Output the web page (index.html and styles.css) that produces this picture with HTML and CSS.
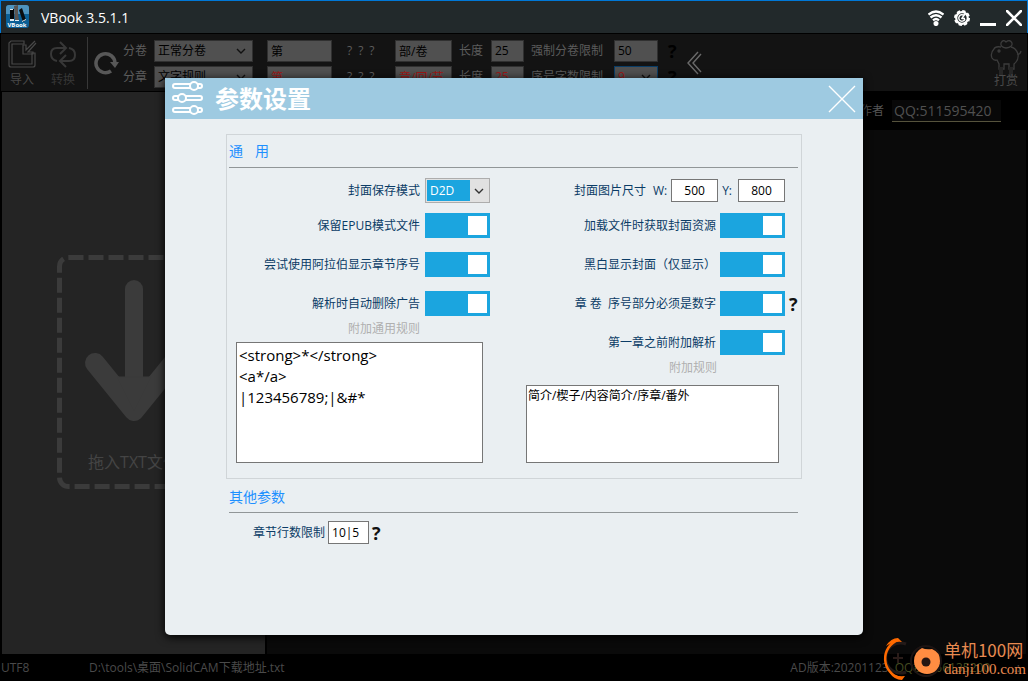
FILE: index.html
```html
<!DOCTYPE html>
<html lang="zh-CN">
<head>
<meta charset="utf-8">
<title>VBook 3.5.1.1</title>
<link rel="stylesheet" href="styles.css">
</head>
<body>
<div class="app">
  <header class="titlebar">
    <svg class="app-icon" width="24" height="24" viewBox="0 0 24 24" aria-hidden="true">
      <rect x="0" y="0" width="23" height="23" rx="3" fill="#0b5f96"/>
      <path d="M0 3a3 3 0 0 1 3-3h17a3 3 0 0 1 3 3v6H0z" fill="#4d93bf"/>
      <path d="M4 4h4v12H4z" fill="#05080a"/>
      <path d="M8 1l4-1v8l1 8H9z" fill="#5a5552"/>
      <path d="M13 5l3-2 4 12-3 2z" fill="#0a0d10"/>
      <path d="M4 14h4v2H4zM9 15h4v1H9zM16 16l4-2v1l-4 2zM4 4h3v1H4z" fill="#dfeaf0"/>
      <text x="11" y="22" text-anchor="middle" class="app-icon-text">VBook</text>
    </svg>
    <h1 class="app-title">VBook 3.5.1.1</h1>
    <div class="window-buttons">
      <button class="icon-button" aria-label="网络">
        <svg width="16" height="16" viewBox="0 0 16 16" fill="none" stroke="#fff" stroke-width="2.300"><path d="M0.500 4.500q7.500-6 15 0M2.500 7.500q5.500-4.500 11 0M5 10.300q3-2.500 6 0"/><circle cx="8" cy="13.500" r="1.400" fill="#fff"/></svg>
      </button>
      <button class="icon-button" aria-label="设置">
        <svg width="16" height="16" viewBox="0 0 16 16" fill="none" stroke="#fff"><circle cx="8" cy="8" r="5.800" stroke-width="2.200"/><circle cx="8" cy="8" r="7.100" stroke-width="1.800" stroke-dasharray="3.400 2.177"/><path d="M10 5.500A3.200 3.200 0 1 0 11 9M7.500 9L11 4M8 8.500h3" stroke-width="1.400"/></svg>
      </button>
      <button class="icon-button" aria-label="最小化">
        <svg width="16" height="16" viewBox="0 0 16 16"><path d="M0 13h16v3H0z" fill="#fff"/></svg>
      </button>
      <button class="icon-button" aria-label="关闭">
        <svg width="16" height="16" viewBox="0 0 16 16"><path d="M1 1l14 14M15 1L1 15" stroke="#fff" stroke-width="2.600" stroke-linecap="round"/></svg>
      </button>
    </div>
  </header>

  <section class="toolbar">
    <button class="tool">
      <svg width="30" height="30" viewBox="0 0 30 30" fill="none" stroke="#484848" stroke-width="1.200"><path d="M17 2H4L2 4v22q0 2 2 2h22q2 0 2-2V14h-3v11H5V5h12z"/><path d="M28 2l-9 9V6h-3v9h10v-2h-5l8-9"/></svg>
      <span>导入</span>
    </button>
    <button class="tool dim">
      <svg width="30" height="30" viewBox="0 0 30 30" fill="none" stroke="#383838" stroke-width="2"><path d="M9 22q-6-1-6-7 0-6 6-6h8M12 3l6 6-6 6M21 9q6 1 6 7 0 6-6 6h-8M18 16l-6 6 6 6"/></svg>
      <span>转换</span>
    </button>
    <div class="tool-divider"></div>
    <button class="icon-button refresh" aria-label="刷新">
      <svg width="26" height="26" viewBox="0 0 26 26"><path d="M17 21A9.500 9.500 0 1 1 21 13" fill="none" stroke="#585858" stroke-width="3.500"/><path d="M16 12h9l-4 6z" fill="#585858"/></svg>
    </button>
    <div class="rules">
      <label for="vol">分卷</label>
      <select id="vol" class="field f-mode"><option>正常分卷</option></select>
      <input class="field f-pre" aria-label="分卷前缀" value="第">
      <span class="marks">?&ensp;?&ensp;?</span>
      <input class="field f-unit" aria-label="分卷单位" value="部/卷">
      <label for="len1">长度</label>
      <input id="len1" class="field f-len" value="25">
      <label for="lim1">强制分卷限制</label>
      <input id="lim1" class="field f-lim" value="50">
      <span class="ask">?</span>

      <label for="chap">分章</label>
      <select id="chap" class="field f-mode"><option>文字规则</option></select>
      <input class="field f-pre red" aria-label="分章前缀" value="第">
      <span class="marks">?&ensp;?&ensp;?</span>
      <input class="field f-unit red" aria-label="分章单位" value="章/回/节">
      <label for="len2">长度</label>
      <input id="len2" class="field f-len red" value="25">
      <label for="lim2">序号字数限制</label>
      <select id="lim2" class="field f-lim red active"><option>9</option></select>
      <span class="ask">?</span>
    </div>
    <button class="icon-button collapse" aria-label="收起">
      <svg width="16" height="24" viewBox="0 0 16 24" fill="none" stroke="#6a6a6a" stroke-width="1.400"><path d="M12 1L2 12l10 11M15 3L7 12l8 9"/></svg>
    </button>
    <button class="tool reward">
      <svg width="32" height="38" viewBox="0 0 32 38" fill="none" stroke="#3c3c3c" stroke-width="1.300"><path d="M11 8Q5 7 4 10q-4 4-2 9 2 3 5 2l2 4v5h5v-5h5v5h5v-5q5-4 4-10-2-6-7-7M27 15q3 1 4-3"/><path d="M16 9q-6-1-5-5 2-4 5-1 4-3 6 1 1 4-6 5z"/><circle cx="9" cy="12" r="1"/><path d="M11 28v9M21 28v9" stroke="#262626" stroke-width="4"/></svg>
      <span>打赏</span>
    </button>
  </section>

  <main class="workspace">
    <section class="drop-panel">
      <div class="drop-zone">
        <svg width="154" height="234" viewBox="0 0 154 234" fill="none" stroke="#3b3b3b" aria-hidden="true">
          <rect x="2.500" y="2.500" width="149" height="229" rx="9" stroke-width="5" stroke-dasharray="15 5"/>
          <path d="M77 34v110" stroke-width="18" stroke-linecap="round"/>
          <path d="M38 108l39 48 39-48" stroke-width="20" stroke-linecap="round" stroke-linejoin="round"/>
          <path d="M60 122h34l-17 34z" fill="#3b3b3b"/>
        </svg>
        <span class="drop-text">拖入TXT文件</span>
      </div>
    </section>
    <section class="content-panel">
      <div class="author-row">
        <label for="author">作者</label>
        <input id="author" class="author" value="QQ:511595420">
      </div>
      <div class="content-area"></div>
    </section>
  </main>

  <footer class="statusbar">
    <span class="encoding">UTF8</span>
    <span class="path">D:\tools\桌面\SolidCAM下载地址.txt</span>
    <span class="version">AD版本:20201123</span>
    <span class="group">QQ群:956135200</span>
    <span class="grip">.:</span>
  </footer>

  <div class="overlay">
    <section class="dialog" role="dialog" aria-labelledby="dialog-title">
      <header class="dialog-head">
        <svg width="34" height="36" viewBox="0 0 34 36" fill="none" stroke="#fff" stroke-width="2" aria-hidden="true">
          <rect x="3" y="3" width="29" height="4" rx="2"/><circle cx="24" cy="5" r="4" fill="#9ecae1"/>
          <rect x="3" y="15" width="29" height="4" rx="2"/><circle cx="12" cy="17" r="4" fill="#9ecae1"/>
          <rect x="3" y="27" width="29" height="4" rx="2"/><circle cx="24" cy="29" r="4" fill="#9ecae1"/>
        </svg>
        <h2 id="dialog-title">参数设置</h2>
        <button class="icon-button dialog-close" aria-label="关闭设置">
          <svg width="28" height="28" viewBox="0 0 28 28" stroke="#fff" stroke-width="1.400"><path d="M1 1l26 26M27 1L1 27"/></svg>
        </button>
      </header>
      <div class="dialog-body">
        <section class="group-box">
          <h3 class="group-title spaced">通<span>用</span></h3>
          <div class="columns">
            <div class="column">
              <div class="row first"><label for="cover">封面保存模式</label><select id="cover" class="combo"><option>D2D</option></select></div>
              <div class="row"><label for="t1">保留EPUB模式文件</label><input id="t1" class="toggle" type="checkbox" checked></div>
              <div class="row"><label for="t2">尝试使用阿拉伯显示章节序号</label><input id="t2" class="toggle" type="checkbox" checked></div>
              <div class="row"><label for="t3">解析时自动删除广告</label><input id="t3" class="toggle" type="checkbox" checked></div>
              <label class="hint" for="rules1">附加通用规则</label>
              <textarea id="rules1" class="box large">&lt;strong&gt;*&lt;/strong&gt;
&lt;a*/a&gt;
|123456789;|&amp;#*</textarea>
            </div>
            <div class="column right">
              <div class="row first size">
                <span>封面图片尺寸</span>
                <label for="cw">W:</label><input id="cw" class="num" value="500">
                <label for="cy">Y:</label><input id="cy" class="num" value="800">
              </div>
              <div class="row"><label for="t4">加载文件时获取封面资源</label><input id="t4" class="toggle" type="checkbox" checked></div>
              <div class="row"><label for="t5">黑白显示封面（仅显示）</label><input id="t5" class="toggle" type="checkbox" checked></div>
              <div class="row"><label for="t6">章 卷&nbsp; 序号部分必须是数字</label><input id="t6" class="toggle" type="checkbox" checked><span class="help">?</span></div>
              <div class="row"><label for="t7">第一章之前附加解析</label><input id="t7" class="toggle" type="checkbox" checked></div>
              <label class="hint" for="rules2">附加规则</label>
              <textarea id="rules2" class="box small">简介/楔子/内容简介/序章/番外</textarea>
            </div>
          </div>
        </section>
        <section class="other">
          <h3 class="group-title">其他参数</h3>
          <div class="other-row">
            <label for="lines">章节行数限制</label>
            <input id="lines" class="num lines" value="10|5">
            <span class="help">?</span>
          </div>
        </section>
      </div>
    </section>
  </div>

  <aside class="watermark">
    <svg width="64" height="44" viewBox="0 0 64 44" fill="none" aria-hidden="true">
      <path d="M26 7A15 15 0 1 0 26 35" stroke="#241a18" stroke-width="3"/>
      <path d="M13 21h10M18 16v10" stroke="#2a1c19" stroke-width="2"/>
      <circle cx="46" cy="24" r="15" stroke="#1c1413" stroke-width="2"/>
      <path d="M18 3A20 20 0 0 0 20 41" stroke="#ff6a00" stroke-width="2.500"/>
      <path d="M6 9Q11 1 18 1l4 4q-8-1-16 4zM9 35q6 5 16 4l-3 4q-8 0-13-8z" fill="#ff6a00"/>
      <path d="M42 11q4 2 10 1 8 3 8 12a13 13 0 1 1-26 0q0-9 8-13z" fill="#ff8d42"/>
      <circle cx="46" cy="25" r="4.500" fill="#241512"/>
    </svg>
    <div class="watermark-text"><strong>单机100网</strong><span>danji100.com</span></div>
  </aside>
</div>
</body>
</html>
```
FILE: styles.css
```css
* { box-sizing: border-box; }

body {
  margin: 0;
  background: #000;
  font: 12px/16px "Open Sans", "Noto Sans CJK SC", sans-serif;
}

h1, h2, h3 { margin: 0; font-weight: 400; }

input, select, textarea, button { font: inherit; margin: 0; border-radius: 0; }

.icon-button {
  display: flex;
  padding: 0;
  border: 0;
  background: none;
}

.app {
  position: relative;
  display: flex;
  flex-direction: column;
  min-height: 100vh;
}

/* Title bar */
.titlebar {
  display: flex;
  align-items: center;
  height: 33px;
  padding: 0 5px;
  border: 1px solid #0078d7;
  border-bottom: 0;
  background: #22292b;
}
.app-icon-text { font: 700 6px "Open Sans", sans-serif; fill: #fff; }
.app-title { margin-left: 11px; padding-top: 2px; font-size: 14px; line-height: 20px; color: #fff; }
.window-buttons { display: flex; gap: 10px; margin-left: auto; padding-top: 2px; }

/* Toolbar */
.toolbar {
  display: flex;
  align-items: center;
  height: 57px;
  margin: 1px 1px 0;
  padding-left: 5px;
  background: #131313;
  color: #5c5c5c;
}
.tool {
  display: flex;
  flex-direction: column;
  align-items: center;
  gap: 3px;
  width: 32px;
  padding: 2px 0 0;
  border: 0;
  background: none;
  font-size: 12px;
  color: #484848;
}
.tool + .tool { margin-left: 9px; }
.tool.dim { color: #363636; }
.tool-divider { width: 1px; height: 52px; margin: 0 6px 0 8px; background: #383838; }
.refresh { margin-right: 3px; }
.rules {
  display: grid;
  grid-template-columns: 31px 113px 80px 48px 64px 32px 40px 83px 54px 11px;
  grid-auto-rows: 26px;
  align-items: center;
  padding-top: 2px;
}
.field {
  height: 22px;
  padding: 0 3px;
  border: 1px solid #303030;
  background-color: #505050;
  color: #000;
}
.f-mode { width: 99px; }
.f-pre { width: 65px; }
.f-unit { width: 57px; }
.f-len { width: 33px; }
.f-lim { width: 44px; }
.red { color: #9c1818; }
.active { border-color: #0a3d66; }
select {
  appearance: none;
  background-repeat: no-repeat;
  background-position: right 6px center;
  background-image: url("data:image/svg+xml,%3Csvg xmlns='http://www.w3.org/2000/svg' width='10' height='6' fill='none' stroke='%23111' stroke-width='1.400'%3E%3Cpath d='M1 1l4 4 4-4'/%3E%3C/svg%3E");
}
.ask { font: 700 18px/20px "Open Sans", sans-serif; color: #000; }
.collapse { margin-left: 7px; }
.reward { margin-left: auto; margin-right: 5px; gap: 0; color: #4a4a4a; }
.reward span { margin-top: -4px; }

/* Workspace */
.workspace { display: flex; flex: 1; gap: 2px; margin: 1px 2px 0; }
.drop-panel {
  display: grid;
  place-items: center;
  flex: 0 0 263px;
  padding-bottom: 2px;
  background: #242424;
}
.drop-zone { display: grid; }
.drop-zone > * { grid-area: 1 / 1; }
.drop-text {
  align-self: end;
  justify-self: center;
  padding-bottom: 16px;
  font-size: 16px;
  line-height: 22px;
  color: #444;
}
.content-panel { display: flex; flex-direction: column; flex: 1; }
.author-row {
  display: flex;
  align-items: center;
  justify-content: flex-end;
  gap: 8px;
  height: 38px;
  padding-right: 25px;
  color: #555;
}
.author {
  width: 109px;
  height: 22px;
  padding: 0 2px;
  border: 0;
  border-bottom: 1px solid #55523c;
  background: #080808;
  font-size: 14px;
  color: #505050;
}
.content-area { flex: 1; background: #0a0a0a; }

/* Status bar */
.statusbar {
  display: flex;
  align-items: center;
  height: 27px;
  padding: 0 8px 0 1px;
  line-height: 18px;
  color: #4a4a4a;
}
.encoding { width: 88px; }
.version { margin-left: auto; }
.group { width: 111px; margin-left: 6px; color: #444b20; }
.grip { margin-left: 8px; }

/* Settings dialog */
.overlay {
  position: absolute;
  inset: 0;
  display: flex;
  padding: 78px 165px 46px;
}
.dialog {
  flex: 1;
  border-radius: 0 0 5px 5px;
  background: #eaeff2;
  box-shadow: 0 2px 10px #000;
  color: #0b3c66;
}
.dialog-head {
  display: flex;
  align-items: center;
  height: 41px;
  padding: 0 7px 0 5px;
  background: #9ecae1;
  color: #fff;
}
.dialog-head h2 { margin-left: 11px; font-size: 24px; line-height: 32px; font-weight: 700; }
.dialog-close { margin-left: auto; }
.dialog-body { padding: 15px 61px 24px; }

.group-box {
  padding: 4px 3px 15px 2px;
  border: 1px solid #d0d5d8;
}
.group-title {
  padding: 2px 0 6px;
  border-bottom: 1px solid #919698;
  font-size: 14px;
  line-height: 20px;
  color: #1e90ff;
}
.spaced span { margin-left: 12px; }

.columns {
  display: grid;
  grid-template-columns: 254fr 272fr;
  gap: 36px;
  padding: 10px 0 0 7px;
}
.column { display: flex; flex-direction: column; }
.right { padding-right: 13px; }
.row {
  position: relative;
  display: flex;
  align-items: center;
  justify-content: flex-end;
  gap: 5px;
  height: 25px;
  margin-bottom: 14px;
}
.right .row { gap: 4px; }
.first { margin-bottom: 10px; }
.size > span { margin-right: 3px; }
.size .num + label { margin-right: 2px; }
.combo {
  width: 65px;
  height: 25px;
  padding: 0 4px;
  border: 1px solid #adadad;
  background-color: #e1e1e1;
  color: #fff;
  background-image:
    url("data:image/svg+xml,%3Csvg xmlns='http://www.w3.org/2000/svg' width='10' height='6' fill='none' stroke='%23333' stroke-width='1.400'%3E%3Cpath d='M1 1l4 4 4-4'/%3E%3C/svg%3E"),
    linear-gradient(#1ba5df, #1ba5df);
  background-position: right 5px center, 1px 1px;
  background-size: 10px 6px, 43px 21px;
}
.toggle {
  appearance: none;
  width: 65px;
  height: 25px;
  background: linear-gradient(#fff, #fff) right 3px center / 19px 19px no-repeat #1ba5df;
}
.toggle:not(:checked) { background-color: #9aa5ab; background-position: left 3px center; }
.help {
  font: 700 18px/20px "Open Sans", sans-serif;
  color: #111;
}
.row .help { position: absolute; left: 100%; margin-left: 4px; }
.num {
  width: 47px;
  height: 23px;
  padding: 0;
  border: 1px solid #767676;
  background: #fff;
  text-align: center;
  color: #000;
}
.hint { margin: -9px 70px 5px 0; text-align: right; color: #b0b0b0; }
.right .hint { margin-right: 68px; margin-bottom: 9px; }
.box {
  display: block;
  border: 1px solid #767676;
  background: #fff;
  color: #000;
  resize: none;
  overflow: hidden;
}
.large { width: calc(100% - 7px); height: 121px; padding: 2px; font-size: 15px; line-height: 21px; }
.small { width: calc(100% - 6px); height: 78px; padding: 2px 1px; }

.other { padding: 6px 4px 0 3px; }
.other .group-title { padding-bottom: 5px; }
.other-row { display: flex; align-items: center; gap: 3px; padding: 8px 0 0 24px; }
.lines { width: 41px; padding-left: 3px; text-align: left; }

/* Site mark over the bottom right corner */
.watermark {
  position: absolute;
  right: 2px;
  bottom: 0;
  display: flex;
  align-items: center;
  font-family: "Liberation Serif", serif;
  color: #e88a50;
}
.watermark-text { display: flex; flex-direction: column; }
.watermark strong { font: 400 17px/20px "Noto Sans CJK SC", sans-serif; }
.watermark-text > span { font-size: 15px; line-height: 18px; }
```
